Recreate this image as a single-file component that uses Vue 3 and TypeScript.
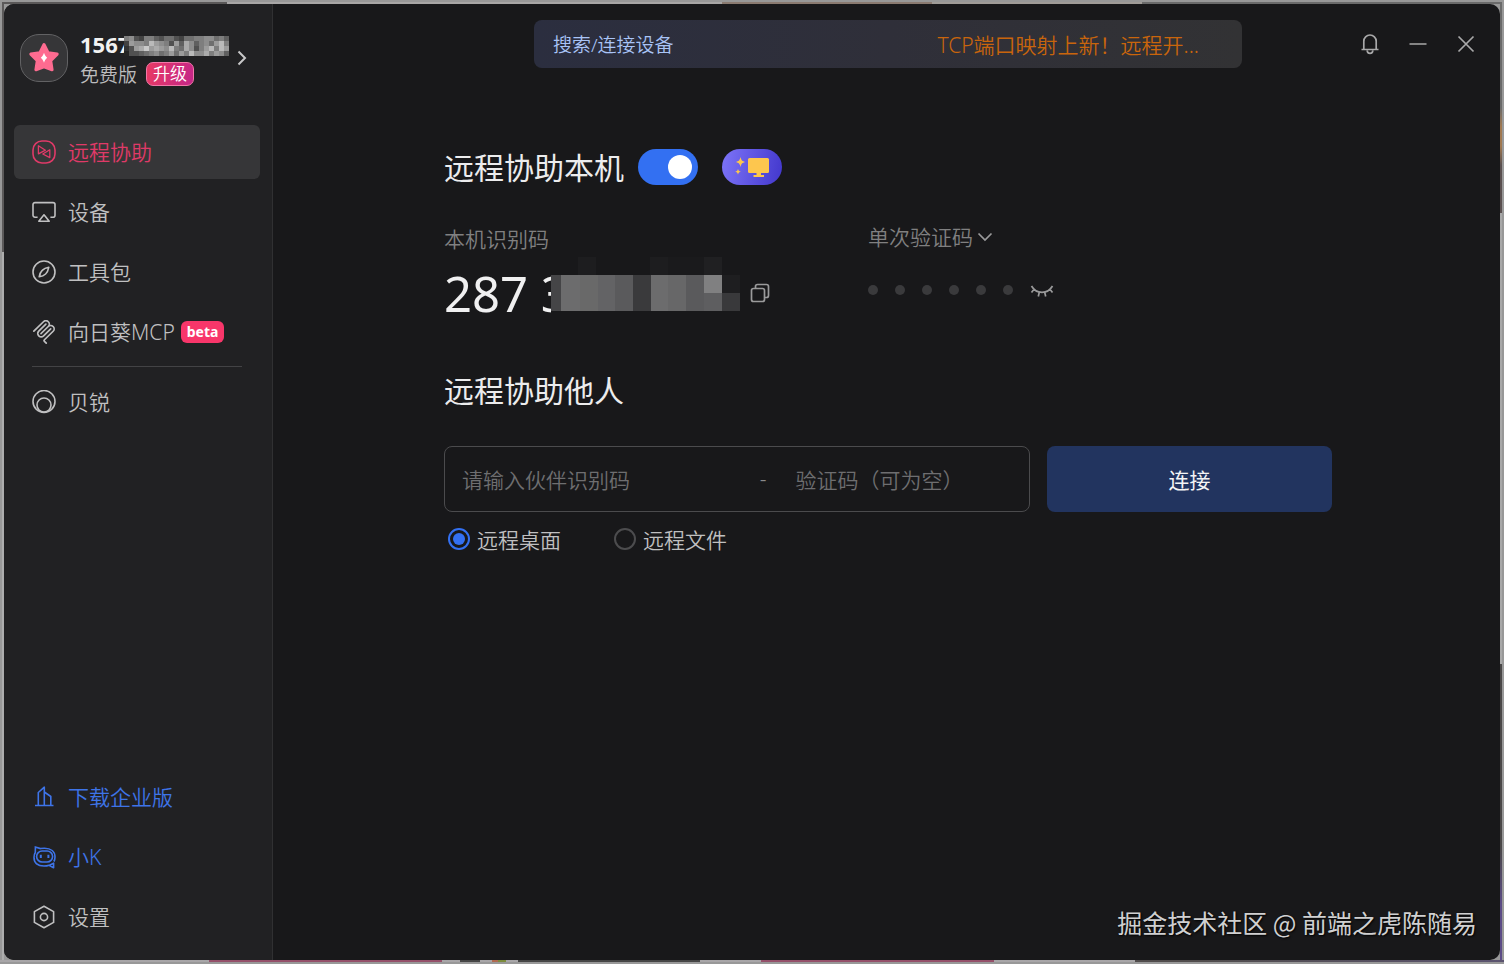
<script setup lang="ts">
import { ref } from 'vue'

interface NavItem {
  id: string
  label: string
  icon: string
  badge?: string
  tone?: string
}

interface Cell {
  x: number
  y: number
  w: number
  h: number
  fill: string
}

const mcpIcon =
  '<g fill="currentColor" stroke="none"><path d="M15.688 2.343a2.588 2.588 0 00-3.61 0l-9.626 9.44a.863.863 0 01-1.203 0 .823.823 0 010-1.18l9.626-9.44a4.313 4.313 0 016.016 0 4.116 4.116 0 011.204 3.54 4.3 4.3 0 013.609 1.18l.05.05a4.115 4.115 0 010 5.9l-8.706 8.537a.274.274 0 000 .393l1.788 1.754a.823.823 0 010 1.18.863.863 0 01-1.203 0l-1.788-1.753a1.92 1.92 0 010-2.754l8.706-8.538a2.47 2.47 0 000-3.54l-.05-.049a2.588 2.588 0 00-3.607-.003l-7.172 7.034-.002.002-.098.097a.863.863 0 01-1.204 0 .823.823 0 010-1.18l7.273-7.133a2.47 2.47 0 00-.003-3.537z"/><path d="M14.485 4.703a.823.823 0 000-1.18.863.863 0 00-1.204 0l-7.119 6.982a4.115 4.115 0 000 5.9 4.314 4.314 0 006.016 0l7.12-6.982a.823.823 0 000-1.18.863.863 0 00-1.204 0l-7.119 6.982a2.588 2.588 0 01-3.61 0 2.47 2.47 0 010-3.54l7.12-6.982z"/></g>'

const mainNav: NavItem[] = [
  {
    id: 'assist',
    label: '远程协助',
    icon: '<rect x="1" y="1" width="22" height="22" rx="9"/><path d="M6.4 5.800v8l7-3.600zM17.800 9.800v7.800L10.800 14z" stroke-width="1.300" stroke-linejoin="round"/>',
  },
  {
    id: 'devices',
    label: '设备',
    icon: '<path d="M5.6 17.2H3A2 2 0 0 1 1 15.200V4.600a2 2 0 0 1 2-2h18a2 2 0 0 1 2 2v10.600a2 2 0 0 1-2 2h-2.600M12 14.800l5.200 6.400H6.800z" stroke-linejoin="round"/>',
  },
  {
    id: 'tools',
    label: '工具包',
    icon: '<circle cx="12" cy="12" r="11"/><path d="M16.800 7.200c-.6 3.400-1.600 5.400-3.200 6.800-1.400 1.300-3.300 2.300-6.400 2.800.6-3.200 1.600-5.100 3-6.400 1.500-1.500 3.400-2.600 6.600-3.200z" stroke-linejoin="round"/>',
  },
  { id: 'mcp', label: '向日葵MCP', icon: mcpIcon, badge: 'beta' },
]

const extraNav: NavItem[] = [
  { id: 'oray', label: '贝锐', icon: '<circle cx="12" cy="11.500" r="11"/><circle cx="12" cy="15" r="7"/>' },
]

const footNav: NavItem[] = [
  {
    id: 'enterprise',
    label: '下载企业版',
    tone: 'blue',
    icon: '<path d="M3 20.500h18.500M6.300 20.500V7.500l6-5.300v18.300M12.300 7l6.500 4.500v9" stroke-linejoin="round"/>',
  },
  {
    id: 'xiaok',
    label: '小K',
    tone: 'blue',
    icon: '<path d="M17 20.200C15.500 20.800 14 21 12 21 5.500 21 2 18 2 12.500c0-2 .4-3.700 1.300-5L3.400 2l5 1.600C9.600 3.200 10.800 3.200 12.500 3.200 19 3.200 23 6.500 23 12c0 1.800-.4 3.200-1.100 4.500"/><rect x="4.600" y="6" width="16" height="11" rx="5.500"/><path d="M8.800 9.800v3.200M16.400 9.800v3.200" stroke-width="2"/><path d="M17 20.400l4.600-2.200v4.600z" stroke-linejoin="round"/>',
  },
  {
    id: 'settings',
    label: '设置',
    icon: '<path d="M12 1.200l9.600 5.400v10.800L12 22.800l-9.600-5.400V6.600z" stroke-linejoin="round"/><circle cx="12" cy="12" r="3.600"/>',
  },
]

const active = ref('assist')
const allowRemote = ref(true)
const codeType = ref('once')
const mode = ref('desktop')
const partnerId = ref('')
const partnerCode = ref('')

const phoneShades = [
  '673266435532556677564',
  '28776a8763849746758a6',
  '1389b8987a6597368a6a8',
  '0334567568586a7796874',
]
const phoneCells: Cell[] = phoneShades.flatMap((row, r) =>
  [...row].map((s, c) => {
    const v = 36 + parseInt(s, 16) * 15
    return { x: c * 5, y: r * 5, w: 5, h: 5, fill: `rgb(${v}, ${v}, ${v})` }
  }),
)

const codeCells: Cell[] = [
  { x: 0, y: 0, w: 189, h: 60, fill: '#18181a' },
  { x: 27, y: 0, w: 18, h: 18, fill: '#1d1d1f' },
  { x: 99, y: 0, w: 18, h: 18, fill: '#1d1d1f' },
  { x: 117, y: 0, w: 36, h: 18, fill: '#1a1a1c' },
  { x: 153, y: 0, w: 18, h: 18, fill: '#202022' },
  { x: 0, y: 18, w: 10, h: 36, fill: '#454547' },
  { x: 10, y: 18, w: 19, h: 36, fill: '#6c6c6d' },
  { x: 29, y: 18, w: 18, h: 36, fill: '#696969' },
  { x: 47, y: 18, w: 17, h: 36, fill: '#636365' },
  { x: 64, y: 18, w: 18, h: 36, fill: '#5a5a5c' },
  { x: 82, y: 18, w: 18, h: 36, fill: '#3a3a3c' },
  { x: 100, y: 18, w: 17, h: 36, fill: '#6c6c6d' },
  { x: 117, y: 18, w: 18, h: 36, fill: '#676768' },
  { x: 135, y: 18, w: 18, h: 36, fill: '#5a5a5c' },
  { x: 153, y: 18, w: 18, h: 18, fill: '#808081' },
  { x: 153, y: 36, w: 18, h: 18, fill: '#5e5e60' },
  { x: 171, y: 18, w: 18, h: 18, fill: '#1e1e20' },
  { x: 171, y: 36, w: 18, h: 18, fill: '#39393b' },
]
</script>

<template>
  <div class="desktop">
    <div class="window">
      <aside class="sidebar">
        <button class="profile" type="button">
          <span class="avatar">
            <svg width="32" height="32" viewBox="0 0 32 32" aria-hidden="true">
              <path d="M16 2.500l4.100 8.200 9.100 1.400-6.500 6.500 1.400 9.200L16 24.800l-8.100 3 1.400-9.200-6.500-6.500 9.100-1.400z" fill="#fe6b90" stroke="#fe6b90" stroke-width="3" stroke-linejoin="round" />
              <path d="M16 10.800c.9 2.600 1.700 3.900 3.200 5-1.500 1.100-2.300 2.400-3.200 5-.9-2.600-1.700-3.900-3.200-5 1.500-1.100 2.300-2.400 3.200-5z" fill="#fff" />
            </svg>
          </span>
          <span class="account">
            <span class="phone">
              <span>1567</span>
              <svg width="105" height="20" viewBox="0 0 105 20" shape-rendering="crispEdges" aria-hidden="true">
                <rect v-for="(c, i) in phoneCells" :key="i" :x="c.x" :y="c.y" :width="c.w" :height="c.h" :fill="c.fill" />
              </svg>
            </span>
            <span class="plan">免费版<span class="upgrade">升级</span></span>
          </span>
          <svg class="arrow" width="10" height="16" viewBox="0 0 10 16" aria-hidden="true">
            <path d="M1.500 1.500L8 8l-6.500 6.500" />
          </svg>
        </button>

        <nav class="nav">
          <button
            v-for="item in mainNav"
            :key="item.id"
            type="button"
            class="nav-item"
            :class="{ active: active === item.id }"
            @click="active = item.id"
          >
            <svg class="icon" viewBox="0 0 24 24" aria-hidden="true" v-html="item.icon"></svg>
            <span class="text">{{ item.label }}</span>
            <span v-if="item.badge" class="badge">{{ item.badge }}</span>
          </button>
        </nav>
        <hr class="rule" />
        <nav class="nav">
          <button
            v-for="item in extraNav"
            :key="item.id"
            type="button"
            class="nav-item"
            :class="{ active: active === item.id }"
            @click="active = item.id"
          >
            <svg class="icon" viewBox="0 0 24 24" aria-hidden="true" v-html="item.icon"></svg>
            <span class="text">{{ item.label }}</span>
          </button>
        </nav>

        <nav class="nav foot">
          <button v-for="item in footNav" :key="item.id" type="button" class="nav-item" :class="item.tone">
            <svg class="icon" viewBox="0 0 24 24" aria-hidden="true" v-html="item.icon"></svg>
            <span class="text">{{ item.label }}</span>
          </button>
        </nav>
      </aside>

      <main class="main">
        <header class="topbar">
          <div class="search">
            <input type="text" placeholder="搜索/连接设备" aria-label="搜索/连接设备" />
            <a href="#news">TCP端口映射上新！远程开...</a>
          </div>
          <div class="controls">
            <button type="button" aria-label="通知">
              <svg width="20" height="22" viewBox="0 0 20 22" aria-hidden="true">
                <path d="M1.500 16.500h17M3.800 16.500V8.200a6.200 6.200 0 0 1 12.400 0v8.300M7.200 17.500a2.800 2.800 0 0 0 5.600 0" />
              </svg>
            </button>
            <button type="button" aria-label="最小化">
              <svg width="20" height="20" viewBox="0 0 20 20" aria-hidden="true"><path d="M1.500 10h17" /></svg>
            </button>
            <button type="button" aria-label="关闭">
              <svg width="20" height="20" viewBox="0 0 20 20" aria-hidden="true"><path d="M2.500 2.500l15 15M17.500 2.500l-15 15" /></svg>
            </button>
          </div>
        </header>

        <div class="content">
          <div class="heading">
            <h2 id="local-title">远程协助本机</h2>
            <input v-model="allowRemote" class="switch" type="checkbox" role="switch" aria-labelledby="local-title" />
            <button class="screen" type="button" aria-label="屏幕">
              <svg width="36" height="24" viewBox="0 0 36 24" aria-hidden="true" fill="#fdc64e">
                <path d="M6.500 2c.7 3.200 1.600 4.200 5 5-3.400.8-4.300 1.800-5 5-.7-3.200-1.600-4.200-5-5 3.400-.8 4.300-1.800 5-5zM4 13.800c.4 1.900 1 2.500 2.900 3-1.900.4-2.500 1-2.900 2.900-.4-1.900-1-2.500-2.900-2.900 1.900-.5 2.500-1.100 2.900-3z" />
                <rect x="14" y="3" width="21" height="15" rx="1.500" />
                <path d="M22.500 18h4.500v2h3v2H19.500v-2h3z" />
              </svg>
            </button>
          </div>

          <section class="codes">
            <div>
              <div class="label">本机识别码</div>
              <div class="code">
                <span>287 3</span>
                <svg class="mask" width="189" height="60" viewBox="0 0 189 60" shape-rendering="crispEdges" aria-hidden="true">
                  <rect v-for="(c, i) in codeCells" :key="i" :x="c.x" :y="c.y" :width="c.w" :height="c.h" :fill="c.fill" />
                </svg>
                <button type="button" class="plain" aria-label="复制">
                  <svg width="20" height="20" viewBox="0 0 20 20" aria-hidden="true">
                    <rect x="1.500" y="5.500" width="13" height="13" rx="2" />
                    <path d="M5.500 5.500V3.500a2 2 0 0 1 2-2h9a2 2 0 0 1 2 2v9a2 2 0 0 1-2 2h-2" />
                  </svg>
                </button>
              </div>
            </div>
            <div>
              <div class="label kind">
                <select v-model="codeType" aria-label="验证码类型">
                  <option value="once">单次验证码</option>
                </select>
                <svg width="16" height="10" viewBox="0 0 16 10" aria-hidden="true"><path d="M1.500 1.500L8 8l6.500-6.500" /></svg>
              </div>
              <div class="secret">
                <i v-for="n in 6" :key="n"></i>
                <button type="button" class="plain" aria-label="显示验证码">
                  <svg width="24" height="16" viewBox="0 0 24 16" aria-hidden="true">
                    <path d="M1.500 4C3.800 8 7.500 10.300 12 10.300S20.200 8 22.500 4M4 7.300L1.500 10.500M20 7.300L22.500 10.500M9.300 10.300L8.300 14.500M14.700 10.300l1 4.200" />
                  </svg>
                </button>
              </div>
            </div>
          </section>

          <h2 class="second">远程协助他人</h2>

          <form @submit.prevent>
            <div class="connect">
              <div class="field">
                <input v-model="partnerId" class="partner" type="text" placeholder="请输入伙伴识别码" aria-label="伙伴识别码" />
                <span class="dash">-</span>
                <input v-model="partnerCode" class="pass" type="text" placeholder="验证码（可为空）" aria-label="验证码" />
              </div>
              <button type="submit">连接</button>
            </div>
            <div class="modes">
              <label><input v-model="mode" type="radio" name="mode" value="desktop" />远程桌面</label>
              <label><input v-model="mode" type="radio" name="mode" value="file" />远程文件</label>
            </div>
          </form>
        </div>
      </main>
      <div class="credit">掘金技术社区 @ 前端之虎陈随易</div>
    </div>
  </div>
</template>

<style>
html,
body {
  margin: 0;
  background: #989898;
}
</style>

<style scoped>
.desktop {
  box-sizing: border-box;
  display: grid;
  min-height: 100vh;
  padding: 4px;
  font-family: "Noto Sans", "Noto Sans CJK SC", sans-serif;
  font-weight: 350;
  font-size: 21px;
  background:
    linear-gradient(90deg, #5a5858 0 15%, #a8a6a6 15% 48%, #8a7a70 48% 62%, #a09c98 62% 76%, #6a6a6a 76%) 2px 2px / calc(100% - 4px) 2px no-repeat,
    linear-gradient(90deg, #a8a6a8 0 209px, #94506a 209px 442px, #a8a6a8 442px 460px, #454545 460px 480px, #a8a6a8 480px 492px, #b06a50 492px 498px, #7c8c3c 498px 506px, #a8a6a8 506px 518px, #454545 518px 700px, #a8a6a8 700px 761px, #94506a 761px 994px, #a8a6a8 994px 1135px, #504c4c 1135px 80%, #5c5470 100%) 0 calc(100% - 2px) / 100% 2px no-repeat,
    linear-gradient(180deg, #5c5a5a 0 26%, #adadad 26%) 2px 2px / 2px calc(100% - 4px) no-repeat,
    linear-gradient(180deg, #6a6a6a 0 11%, #a07850 13% 15%, #5a5050 17% 22%, #a8a8a8 22% 69%, #4a4848 69% 88%, #5c4c86 94% 100%) calc(100% - 2px) 2px / 2px calc(100% - 4px) no-repeat,
    #989898;
}

button,
input,
select {
  margin: 0;
  padding: 0;
  border: 0;
  background: none;
  color: inherit;
  font: inherit;
  outline: none;
}

button {
  cursor: pointer;
}

svg {
  display: block;
  flex: none;
}

.window {
  position: relative;
  display: grid;
  grid-template-columns: 269px minmax(0, 1fr);
  overflow: hidden;
  border-radius: 10px;
  background: #18181a;
  color: #c0c0c1;
}

.sidebar {
  box-sizing: border-box;
  display: flex;
  flex-direction: column;
  padding: 24px 12px 16px 10px;
  border-right: 1px solid #303032;
  background: #212123;
}

.profile {
  display: flex;
  align-items: center;
  gap: 12px;
  height: 60px;
  margin-bottom: 37px;
  padding: 0 6px;
  text-align: left;
}

.avatar {
  box-sizing: border-box;
  display: grid;
  place-items: center;
  flex: none;
  width: 48px;
  height: 48px;
  border: 1px solid #626264;
  border-radius: 19px;
  background: #363638;
}

.account {
  display: grid;
}

.phone {
  display: flex;
  align-items: center;
  height: 32px;
  color: #f2f2f2;
  font-size: 22px;
  font-weight: 700;
}

.phone svg {
  z-index: 1;
  margin-left: -6px;
  margin-top: 4px;
}

.plan {
  display: flex;
  align-items: center;
  gap: 9px;
  height: 28px;
  color: #bcbcbd;
  font-size: 19px;
}

.upgrade {
  box-sizing: border-box;
  padding: 0 6px;
  border: 1px solid #f277a8;
  border-radius: 7px;
  background: linear-gradient(100deg, #e83a64, #c42688);
  color: #fff;
  font-size: 17px;
  line-height: 22px;
}

.arrow {
  margin-left: -4px;
  fill: none;
  stroke: #c8c8c9;
  stroke-width: 2;
}

.nav {
  display: grid;
  gap: 6px;
}

.nav-item {
  display: flex;
  align-items: center;
  gap: 12px;
  height: 54px;
  padding: 0 18px;
  border-radius: 6px;
  white-space: nowrap;
}

.text {
  padding-bottom: 2px;
}

.nav-item.active {
  background: #363638;
  color: #e03a68;
}

.nav-item.blue {
  color: #3e74e8;
}

.icon {
  width: 24px;
  height: 24px;
  fill: none;
  stroke: currentColor;
  stroke-width: 1.6;
}

.badge {
  margin-left: -6px;
  padding: 0 6px;
  border-radius: 6px;
  background: #f8366a;
  color: #fff;
  font-size: 14px;
  font-weight: 700;
  line-height: 22px;
}

.rule {
  width: 210px;
  height: 1px;
  margin: 7px 18px 8px;
  border: 0;
  background: #434345;
}

.foot {
  margin-top: auto;
}

.main {
  min-width: 0;
  padding-left: 3px;
}

.topbar {
  display: grid;
  grid-template-columns: 1fr minmax(0, 708px) 1fr;
  padding-top: 16px;
}

.search {
  grid-column: 2;
  display: flex;
  align-items: center;
  height: 48px;
  padding: 0 43px 0 19px;
  border-radius: 8px;
  background: linear-gradient(90deg, #2b2e3f, #2f2f39 50%, #323234);
}

.search input {
  flex: 1;
  min-width: 0;
  padding-top: 2px;
  font-size: 19px;
}

.search input::placeholder {
  color: #a9c4f6;
  opacity: 1;
}

.search a {
  color: #c9650c;
  text-decoration: none;
  white-space: nowrap;
}

.controls {
  display: flex;
  justify-content: flex-end;
  padding-right: 10px;
}

.controls button {
  display: grid;
  place-items: center;
  width: 48px;
  height: 48px;
}

.controls svg {
  fill: none;
  stroke: #a8a8a9;
  stroke-width: 1.7;
}

.content {
  max-width: 888px;
  margin: 81px auto 0;
}

.heading {
  display: flex;
  align-items: center;
  height: 36px;
}

h2 {
  margin: 0;
  color: #ececed;
  font-size: 30px;
  font-weight: 400;
  line-height: 36px;
}

.heading h2 {
  padding-top: 2px;
}

.switch {
  display: flex;
  align-items: center;
  justify-content: flex-end;
  box-sizing: border-box;
  width: 60px;
  height: 36px;
  margin: 0 24px 0 14px;
  padding: 0 6px;
  border-radius: 18px;
  background: #3370f2;
  appearance: none;
}

.switch::after {
  content: "";
  width: 24px;
  height: 24px;
  border-radius: 50%;
  background: #fff;
}

.switch:not(:checked) {
  justify-content: flex-start;
  background: #4a4a4c;
}

.screen {
  display: grid;
  place-items: center;
  width: 60px;
  height: 36px;
  border-radius: 18px;
  background: linear-gradient(100deg, #7d74f8, #4237cc);
}

.codes {
  display: grid;
  grid-template-columns: 424fr 464fr;
  margin-top: 38px;
}

.label {
  display: flex;
  align-items: center;
  height: 30px;
  color: #808081;
}

.code {
  display: flex;
  align-items: center;
  height: 80px;
  color: #f0f0f1;
  font-size: 49px;
  font-weight: 400;
}

.mask {
  z-index: 1;
  margin-bottom: 12px;
  margin-left: -18px;
}

.plain {
  margin-left: 10px;
}

.plain svg {
  fill: none;
  stroke: #9a9a9b;
  stroke-width: 1.7;
}

.kind {
  gap: 4px;
  height: 28px;
}

.kind select {
  appearance: none;
}

.kind option {
  background: #212123;
}

.kind svg {
  fill: none;
  stroke: #9a9a9b;
  stroke-width: 1.7;
}

.secret {
  display: flex;
  align-items: center;
  gap: 17px;
  height: 78px;
}

.secret i {
  width: 10px;
  height: 10px;
  border-radius: 50%;
  background: #3a3a3c;
}

.secret .plain {
  margin-left: 0;
}

.second {
  margin-top: 40px;
}

.connect {
  display: grid;
  grid-template-columns: minmax(0, 1fr) 285px;
  gap: 17px;
  height: 66px;
  margin-top: 37px;
}

.field {
  display: flex;
  align-items: center;
  box-sizing: border-box;
  padding-left: 17px;
  border: 1px solid #4b4b4d;
  border-radius: 8px;
}

.field input {
  padding-top: 2px;
}

.partner {
  flex: 297 1 0;
  min-width: 0;
}

.dash {
  margin-right: 29px;
  color: #8a8a8b;
}

.pass {
  flex: 233 1 0;
  min-width: 0;
}

.field input::placeholder {
  color: #6e6e70;
  opacity: 1;
}

.connect button {
  border-radius: 8px;
  background: #22345f;
  color: #f4f4f5;
  font-weight: 400;
}

.modes {
  display: flex;
  gap: 53px;
  margin-top: 12px;
  padding-left: 4px;
}

.modes label {
  display: flex;
  align-items: center;
  gap: 7px;
  height: 30px;
}

.modes input {
  display: grid;
  place-items: center;
  box-sizing: border-box;
  width: 22px;
  height: 22px;
  border: 2px solid #4c4c4e;
  border-radius: 50%;
  appearance: none;
}

.modes input:checked {
  border-color: #3370f2;
}

.modes input:checked::after {
  content: "";
  width: 12px;
  height: 12px;
  border-radius: 50%;
  background: #3370f2;
}

.credit {
  position: absolute;
  right: 23px;
  bottom: 22px;
  color: #d0d0d1;
  font-family: "Noto Sans CJK SC", sans-serif;
  font-size: 25px;
  font-weight: 400;
  line-height: 32px;
  text-shadow: 1px 1px 2px #000;
}
</style>
